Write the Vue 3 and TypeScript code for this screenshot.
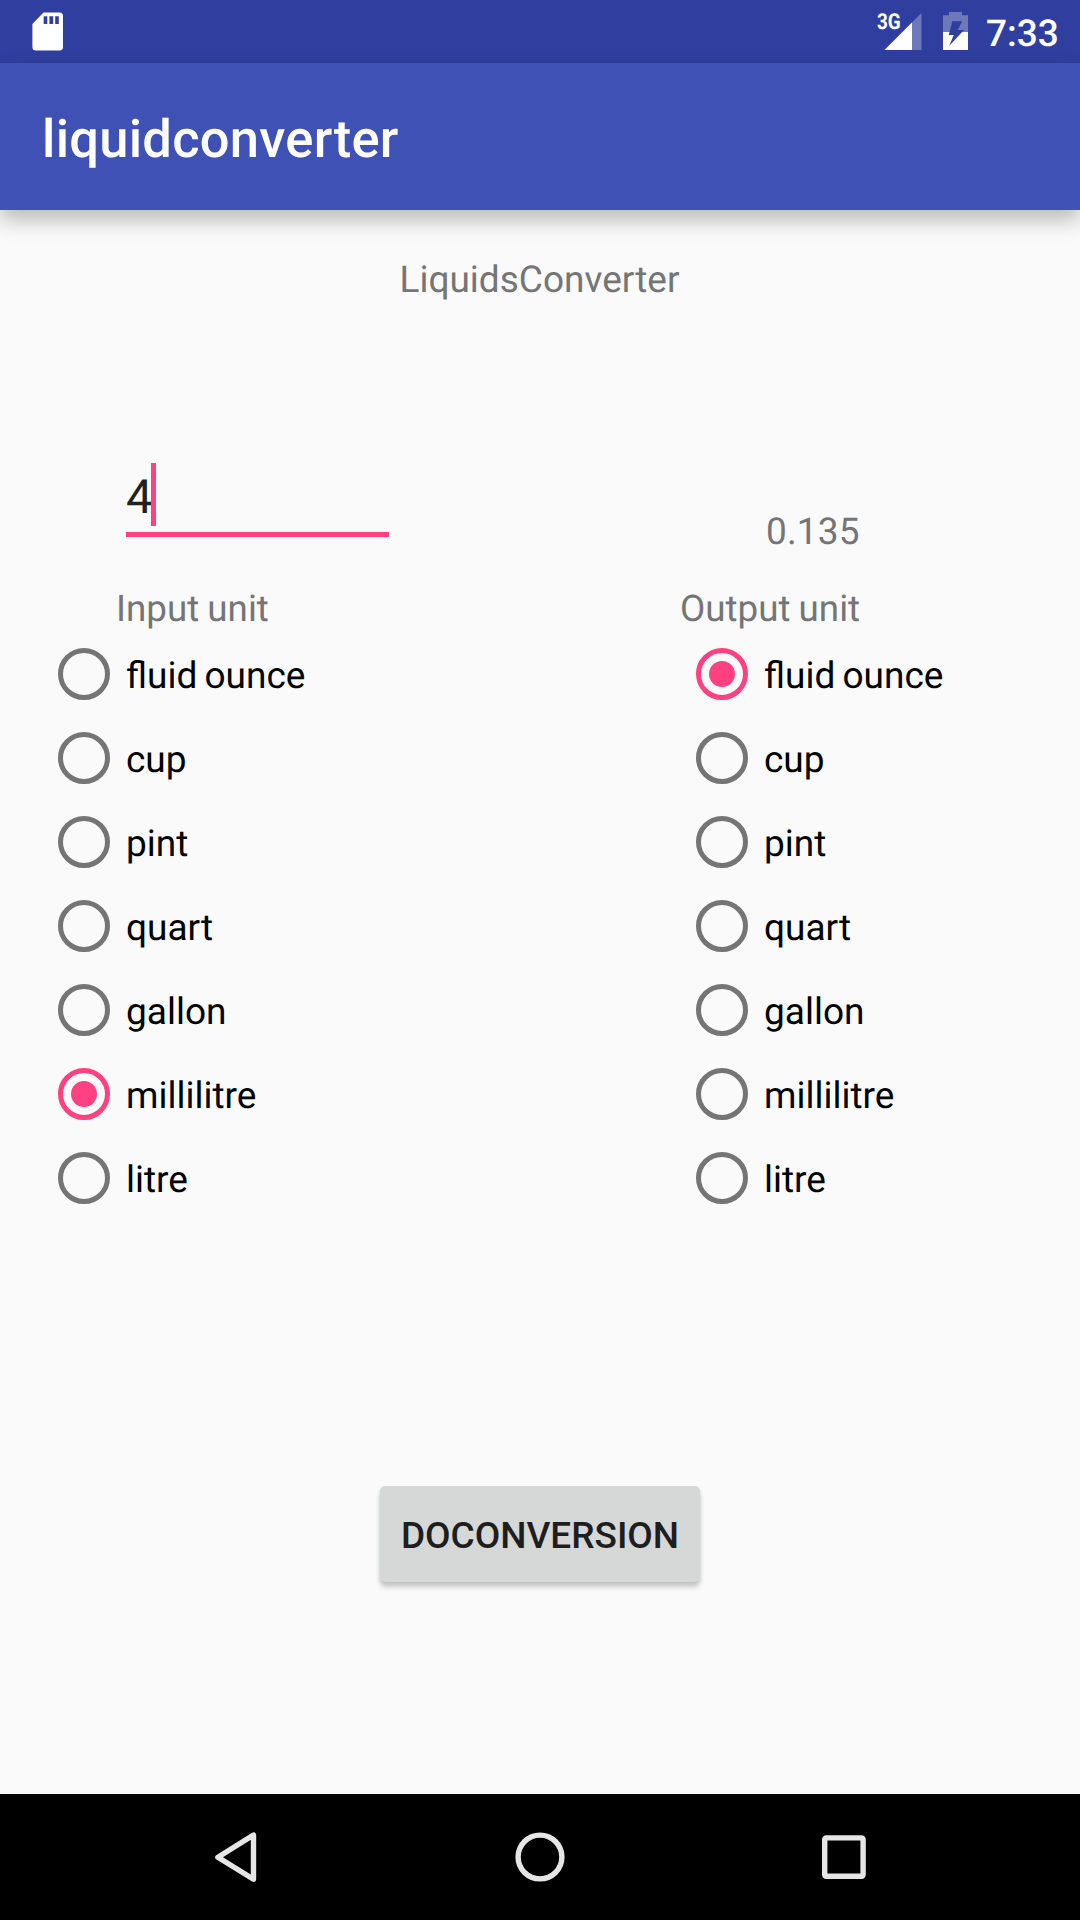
<script setup lang="ts">
import { ref } from 'vue'

const units: string[] = ['fluid ounce', 'cup', 'pint', 'quart', 'gallon', 'millilitre', 'litre']

// Size of each unit in millilitres
const millilitres: Record<string, number> = {
  'fluid ounce': 29.5735,
  cup: 236.588,
  pint: 473.176,
  quart: 946.353,
  gallon: 3785.41,
  millilitre: 1,
  litre: 1000,
}

const amount = ref<string>('4')
const result = ref<string>('0.135')
const inputUnit = ref<string>('millilitre')
const outputUnit = ref<string>('fluid ounce')

function convert(): void {
  const value = (Number(amount.value) * millilitres[inputUnit.value]) / millilitres[outputUnit.value]
  result.value = value.toFixed(3)
}
</script>

<template>
  <div class="screen">
    <header class="status-bar">
      <svg class="sd-icon" width="31" height="39" viewBox="0 0 31 39">
        <path
          fill="#fff"
          fill-rule="evenodd"
          d="M11.5 0.5H27.5Q31 0.5 31 4V35Q31 38.5 27.5 38.5H4Q0.4 38.5 0.4 35V12ZM11.7 4.2V12H15.3V4.2ZM17.4 4.2V12H21.2V4.2ZM23.2 4.2V12H26.8V4.2Z"
        />
      </svg>
      <div class="status-right">
        <div class="signal">
          <svg width="47" height="37" viewBox="0 0 47 37">
            <path fill="#fff" fill-opacity=".3" d="M46.5 0V37H9.5Z" />
            <path fill="#fff" d="M37 9.5V37H9.5Z" />
          </svg>
          <span class="network">3G</span>
        </div>
        <svg class="battery" width="25" height="38" viewBox="0 0 25 38">
          <path
            fill="#fff"
            fill-opacity=".3"
            d="M6 0H19V3.3H25V20H19.1L21 18H14.7L19.3 9.3H9.3L6.5 20H0V3.3H6Z"
          />
          <path fill="#fff" d="M0 20H6.5L5.7 23H10.7L6.3 33.7L19.1 20H25V38H0Z" />
        </svg>
        <span class="clock">7:33</span>
      </div>
    </header>

    <div class="app-bar">
      <h1>liquidconverter</h1>
    </div>

    <main>
      <h2>LiquidsConverter</h2>

      <div class="converter">
        <section class="side side-input">
          <div class="field">
            <span class="amount">{{ amount }}</span>
            <i class="caret"></i>
          </div>
          <div class="unit-label">Input unit</div>
          <div class="unit-list">
            <div v-for="unit in units" :key="unit" class="option" @click="inputUnit = unit">
              <span class="radio" :class="{ checked: inputUnit === unit }"></span>
              <span>{{ unit }}</span>
            </div>
          </div>
        </section>

        <section class="side side-output">
          <div class="result">{{ result }}</div>
          <div class="unit-label">Output unit</div>
          <div class="unit-list">
            <div v-for="unit in units" :key="unit" class="option" @click="outputUnit = unit">
              <span class="radio" :class="{ checked: outputUnit === unit }"></span>
              <span>{{ unit }}</span>
            </div>
          </div>
        </section>
      </div>

      <button type="button" @click="convert">DOCONVERSION</button>
    </main>

    <nav>
      <svg width="50" height="50" viewBox="0 0 50 50">
        <path d="M38.5 3V47.2L2.9 25.2Z" />
      </svg>
      <svg width="50" height="50" viewBox="0 0 50 50">
        <circle cx="25" cy="25" r="21.9" />
      </svg>
      <svg width="50" height="50" viewBox="0 0 50 50">
        <rect x="9.7" y="5.9" width="38.4" height="38.4" rx="1.5" />
      </svg>
    </nav>
  </div>
</template>

<style>
body {
  margin: 0;
}
</style>

<style scoped>
.screen {
  width: 1080px;
  height: 1920px;
  display: flex;
  flex-direction: column;
  overflow: hidden;
  background: #fafafa;
  font-family: Roboto, 'Liberation Sans', sans-serif;
  font-size: 37px;
  line-height: 45px;
  color: #000;
  text-rendering: geometricPrecision;
}

.status-bar {
  flex: none;
  box-sizing: border-box;
  height: 63px;
  padding: 12px 21px 0 32px;
  display: flex;
  justify-content: space-between;
  align-items: flex-start;
  background: #303f9f;
  color: #fff;
}

.status-right {
  display: flex;
  align-items: flex-start;
}

.signal {
  position: relative;
  width: 47px;
  margin: 1px 21px 0 0;
}

.signal svg {
  display: block;
}

.network {
  position: absolute;
  left: 2px;
  top: -3px;
  font-size: 22px;
  line-height: 26px;
  font-weight: 700;
  transform: scaleX(0.86);
  transform-origin: left;
}

.battery {
  margin-right: 18px;
}

.clock {
  width: 73px;
  font-weight: 500;
}

.app-bar {
  flex: none;
  position: relative;
  box-sizing: border-box;
  height: 147px;
  padding: 45px 42px 0;
  background: #3f51b5;
  box-shadow: 0 10px 20px rgba(0, 0, 0, 0.26);
}

h1 {
  margin: 0;
  font-size: 52.5px;
  line-height: 62px;
  font-weight: 500;
  letter-spacing: 0.25px;
  color: #fff;
}

main {
  flex: 1;
  display: flex;
  flex-direction: column;
  align-items: center;
}

h2 {
  margin: 48px 0 0;
  padding-right: 1px;
  font-size: inherit;
  font-weight: 400;
  color: #757575;
}

.converter {
  align-self: stretch;
  margin: 160px 121px 0 58px;
  display: flex;
  justify-content: space-between;
}

.side {
  display: flex;
  flex-direction: column;
}

.side-output {
  width: 263px;
}

.field {
  box-sizing: border-box;
  width: 263px;
  height: 74px;
  margin-left: 68px;
  display: flex;
  border-bottom: 5px solid #ff4081;
}

.amount {
  padding-top: 7px;
  font-size: 47.25px;
  line-height: 55px;
  color: #212121;
}

.caret {
  width: 5px;
  height: 63px;
  margin-left: -2px;
  background: #ff4081;
}

.unit-label {
  font-size: 36.75px;
  line-height: 43px;
  word-spacing: -1px;
}

.side-input .unit-label {
  margin: 50px 0 0 58px;
}

.result,
.unit-label {
  color: #757575;
}

.result {
  margin: 47px 0 0 70px;
  letter-spacing: 0.15px;
}

.side-output .unit-label {
  margin: 32px 0 0 -16px;
}

.unit-list {
  margin-top: 2px;
}

.option {
  height: 84px;
  display: flex;
  align-items: center;
  gap: 16px;
}

.option > span:last-child {
  padding-top: 5px;
  white-space: nowrap;
  word-spacing: -2px;
}

.radio {
  box-sizing: border-box;
  width: 52px;
  height: 52px;
  display: flex;
  align-items: center;
  justify-content: center;
  border: 5px solid #757575;
  border-radius: 50%;
}

.radio.checked {
  border-color: #ff4081;
}

.radio.checked::after {
  content: '';
  width: 26px;
  height: 26px;
  border-radius: 50%;
  background: #ff4081;
}

button {
  width: 320px;
  height: 96px;
  margin-top: 266px;
  padding: 2px 0 0;
  border: 0;
  border-radius: 5px;
  background: #d6d8d7;
  box-shadow: 0 5px 5px rgba(0, 0, 0, 0.2), 0 1px 4px rgba(0, 0, 0, 0.06);
  font: 500 37px/43px Roboto, 'Liberation Sans', sans-serif;
  color: #1e1e1e;
}

nav {
  flex: none;
  box-sizing: border-box;
  height: 126px;
  padding: 0 215px;
  display: flex;
  align-items: center;
  justify-content: space-between;
  background: #000;
}

nav svg {
  overflow: visible;
  fill: none;
  stroke: #e6e6e6;
  stroke-width: 5.4;
  stroke-linejoin: round;
}
</style>
